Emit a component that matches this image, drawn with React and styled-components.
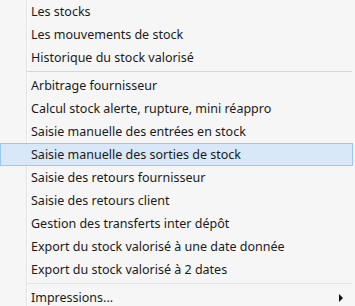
import React from "react"
import styled, { createGlobalStyle } from "styled-components"

const GlobalStyle = createGlobalStyle`
  html, body {
    margin: 0;
    padding: 0;
    background: #f6f6f6;
  }
`

const Menu = styled.div`
  position: relative;
  width: 355px;
  height: 306px;
  overflow: hidden;
  background: #f6f6f6;
  font-family: "Noto Sans", "Open Sans", sans-serif;
  font-size: 12.5px;
  color: #1a1a1a;
  display: flex;
  flex-direction: column;
  box-sizing: border-box;

  &::before {
    content: "";
    position: absolute;
    left: 26px;
    top: 0;
    bottom: 0;
    width: 1px;
    background: #e2e2e2;
  }
  &::after {
    content: "";
    position: absolute;
    left: 27px;
    top: 0;
    bottom: 0;
    width: 1px;
    background: #ffffff;
  }
`

const Item = styled.div`
  position: relative;
  z-index: 1;
  height: 23px;
  flex: none;
  display: flex;
  align-items: center;
  justify-content: space-between;
  padding-left: 30px;
  padding-right: 9px;
  box-sizing: border-box;
  margin-right: 2px;
  white-space: nowrap;
  border: 1px solid ${(p) => (p.$active ? "#99c8f1" : "transparent")};
  background: ${(p) => (p.$active ? "#d8e8f8" : "transparent")};
`

const Separator = styled.div`
  position: relative;
  z-index: 1;
  flex: none;
  height: 5px;
  display: flex;
  align-items: center;
  padding-left: 26px;
  padding-right: 3px;

  &::before {
    content: "";
    flex: 1;
    height: 1px;
    background: ${(p) => p.$tone || "#d7d7d7"};
  }
`

const Arrow = styled.svg`
  width: 4px;
  height: 8px;
  display: block;
`

const groups = [
  ["Les stocks", "Les mouvements de stock", "Historique du stock valorisé"],
  [
    "Arbitrage fournisseur",
    "Calcul stock alerte, rupture, mini réappro",
    "Saisie manuelle des entrées en stock",
    "Saisie manuelle des sorties de stock",
    "Saisie des retours fournisseur",
    "Saisie des retours client",
    "Gestion des transferts inter dépôt",
    "Export du stock valorisé à une date donnée",
    "Export du stock valorisé à 2 dates",
  ],
]

export default function App() {
  return (
    <>
      <GlobalStyle />
      <Menu>
        {groups[0].map((t) => (
          <Item key={t}>{t}</Item>
        ))}
        <Separator />
        {groups[1].map((t) => (
          <Item key={t} $active={t === "Saisie manuelle des sorties de stock"}>
            {t}
          </Item>
        ))}
        <Separator $tone="#dde5e8" />
        <Item>
          Impressions...
          <Arrow viewBox="0 0 4 8">
            <path d="M0 0 L4 4 L0 8 Z" fill="#111" />
          </Arrow>
        </Item>
      </Menu>
    </>
  )
}
